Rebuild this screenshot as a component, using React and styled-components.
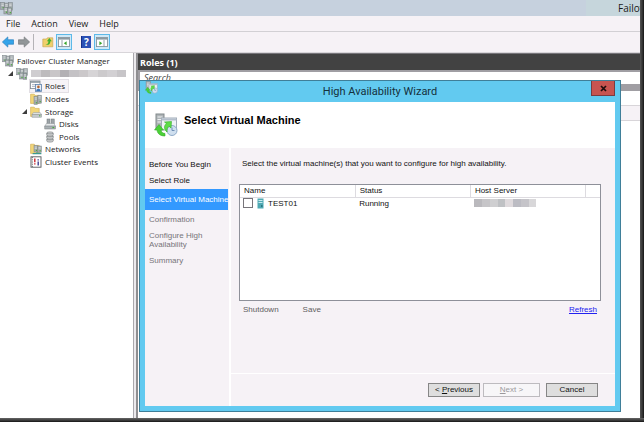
import React from "react";
import styled, { createGlobalStyle, css } from "styled-components";

const GlobalStyle = createGlobalStyle`
  * {
    box-sizing: border-box;
  }

  body {
    margin: 0;
    background: #fff;
    color: #1a1a1a;
    font-family: "Open Sans", "Noto Sans", sans-serif;
    font-size: 8px;
    line-height: 12px;
  }

  button,
  input {
    font-family: inherit;
    font-size: inherit;
    line-height: inherit;
  }
`;

/* ---------- main window ---------- */

const Desktop = styled.div`
  position: relative;
  display: grid;
  min-height: 100vh;
  padding: 0 4px 4px 0;
  background: linear-gradient(to bottom, #666 0, #2e2e2e 3px, #111 4px) bottom / 100% 4px no-repeat,
    linear-gradient(to right, #555, #2b2b2b 3px, #111) right / 4px 100% no-repeat, #222;
`;

const Window = styled.div`
  display: flex;
  flex-direction: column;
  min-width: 0;
  background: #fff;
`;

const TitleBar = styled.header`
  display: flex;
  justify-content: space-between;
  align-items: center;
  height: 16px;
  background: linear-gradient(to right, #c6d1de 0, #c6d1de calc(100% - 54px), #c6d6dc calc(100% - 54px));
`;

const WindowTitle = styled.span`
  width: 22px;
  overflow: hidden;
  white-space: nowrap;
  font-size: 10px;
`;

const MenuBar = styled.nav`
  display: flex;
  align-items: center;
  gap: 11px;
  height: 16px;
  padding-left: 6px;
  background: #f6f2f6;
  border-bottom: 1px solid #d2d0d4;
  font-size: 9px;
`;

const MenuItem = styled.button`
  padding: 0;
  border: 0;
  background: none;
  color: inherit;
`;

const ToolBar = styled.div`
  display: flex;
  align-items: center;
  gap: 6px;
  height: 21px;
  background: #f6f2f6;
  border-bottom: 1px solid #d8d5d9;
`;

const ToolGroup = styled.div`
  display: flex;
  align-items: center;
  padding-right: ${(p) => (p.$divided ? 1 : 0)}px;
  border-right: ${(p) => (p.$divided ? "1px solid #b5b3b7" : "0")};
`;

const ToolButton = styled.button`
  display: flex;
  align-items: center;
  justify-content: center;
  width: 16px;
  height: 16px;
  padding: 0;
  border: 1px solid ${(p) => (p.$active ? "#5db9e8" : "transparent")};
  background: ${(p) => (p.$active ? "#cfe9f7" : "none")};
`;

const Workspace = styled.div`
  display: grid;
  grid-template-columns: 138px 1fr;
  flex: 1;
`;

/* ---------- tree ---------- */

const TreePane = styled.aside`
  padding-top: 2px;
  background: #fff;
  border-right: 2px solid #8f8e91;
  box-shadow: inset -2px 0 #eceaed, inset -3px 0 #a9a7ac;
`;

const Tree = styled.div`
  display: flex;
  flex-direction: column;
  justify-content: space-between;
  height: 113px;
`;

const TreeRow = styled.div`
  display: flex;
  align-items: center;
  height: 12px;
  padding-left: ${(p) => 2 + p.$level * 14}px;
`;

const Twisty = styled.span`
  width: 8px;
  height: 12px;
  margin-left: -8px;
  display: flex;
  align-items: center;
`;

const TreeLabel = styled.span`
  display: flex;
  align-items: center;
  gap: 3px;
  height: 12px;
  padding-right: 3px;
  white-space: nowrap;
  ${(p) =>
    p.$selected &&
    css`
      background: #f6f3f7;
      box-shadow: 0 0 0 1px #e2dfe4;
    `}
`;

const Mosaic = styled.span`
  display: flex;
  width: ${(p) => p.$width}px;
  height: ${(p) => p.$height}px;
`;

const MosaicTile = styled.span`
  flex: 1;
  background: ${(p) => p.$tone};
`;

/* ---------- roles list ---------- */

const RolesPane = styled.main`
  background: #fff;
`;

const RolesHeading = styled.h1`
  height: 17px;
  margin: 0;
  padding: 2px 2px 0;
  background: #424242;
  border-top: 1px solid #77757a;
  color: #fff;
  font-size: 9px;
  line-height: 13px;
  font-weight: 700;
`;

const SearchStrip = styled.div`
  height: 21px;
  padding: 2px 0 7px 2px;
  background: #a09ea3;
`;

const SearchInput = styled.input`
  display: block;
  width: 100%;
  height: 12px;
  padding: 0 4px;
  border: 0;
  background: #fff;
  font-size: 9px;
  font-style: italic;

  &::placeholder {
    color: #444;
    opacity: 1;
  }
`;

const ColumnStrip = styled.div`
  height: 16px;
  margin-top: 14px;
  background: #f6f2f6;
  border: solid #d8d5d9;
  border-width: 1px 0;
`;

/* ---------- wizard ---------- */

const Dialog = styled.section`
  position: absolute;
  top: 80px;
  right: 23px;
  bottom: 10px;
  left: 139px;
  display: flex;
  flex-direction: column;
  padding: 0 5px 5px;
  background: #62caf0;
  border: 1px solid #3f7f99;
  color: #111;
  font-family: "Liberation Sans", Arial, sans-serif;
  line-height: 9px;
`;

const DialogBar = styled.header`
  display: grid;
  grid-template-columns: 24px 1fr 24px;
  height: 21px;
`;

const DialogTitle = styled.h2`
  margin: 0;
  color: #15303b;
  font-family: Roboto, sans-serif;
  font-size: 11px;
  font-weight: 400;
  line-height: 21px;
  text-align: center;
`;

const CloseButton = styled.button`
  display: flex;
  align-items: center;
  justify-content: center;
  width: 24px;
  height: 15px;
  padding: 0;
  border: 1px solid #7b3b40;
  border-top: 0;
  background: #c75450;
`;

const Banner = styled.div`
  display: flex;
  align-items: center;
  gap: 6px;
  height: 46px;
  padding-left: 9px;
  background: #fff;
`;

const BannerTitle = styled.h3`
  margin: 0 0 10px;
  color: #000;
  font-size: 11px;
  line-height: 14px;
  font-weight: 700;
`;

const DialogBody = styled.div`
  display: grid;
  grid-template-columns: 84px 1fr;
  flex: 1;
  gap: 2px;
  background: #fff;
`;

const Steps = styled.ol`
  margin: 0;
  padding: 9px 0 0;
  background: #f6f2f6;
  list-style: none;
`;

const Step = styled.li`
  padding: 3px 4px 4px;
  margin-right: 1px;
  color: ${(p) => (p.$pending ? "#77757a" : "#111")};
  ${(p) =>
    p.$current &&
    css`
      margin-bottom: 2px;
      padding: 6px 4px;
      background: #3399ff;
      color: #fff;
      white-space: nowrap;
    `}
`;

const StepContent = styled.div`
  display: flex;
  flex-direction: column;
  gap: 1px;
  background: #fff;
`;

const Panel = styled.div`
  flex: 1;
  padding: 11px 14px 0 8px;
  background: #f6f2f6;
`;

const Prompt = styled.p`
  margin: 0 0 16px;
  padding-left: 3px;
  white-space: nowrap;
`;

const ListBox = styled.div`
  height: 117px;
  background: #fff;
  border: 1px solid #8e9099;
`;

const VmTable = styled.table`
  width: 100%;
  border-collapse: collapse;
  table-layout: fixed;

  th,
  td {
    height: 12px;
    padding: 0 4px;
    font-weight: 400;
    text-align: left;
    white-space: nowrap;
  }

  th {
    border-right: 1px solid #dddbe0;
    border-bottom: 1px solid #dddbe0;
  }

  th:last-child {
    border-right: 0;
  }
`;

const Column = styled.col`
  width: ${(p) => p.$width};
`;

const VmLabel = styled.label`
  display: flex;
  align-items: center;
  gap: 4px;
`;

const CheckBox = styled.input`
  appearance: none;
  flex: none;
  width: 10px;
  height: 10px;
  margin: 0 0 0 -1px;
  border: 1px solid #77757a;
  background: #fff;
`;

const Actions = styled.div`
  display: flex;
  gap: 24px;
  padding: 4px 4px 0;

  a {
    margin-left: auto;
    color: #2222f0;
  }
`;

const TextButton = styled.button`
  padding: 0;
  border: 0;
  background: none;
  color: #5f5d61;
`;

const Footer = styled.footer`
  display: flex;
  justify-content: flex-end;
  gap: 3px;
  height: 32px;
  padding: 9px 17px 0 0;
  background: #f6f2f6;
`;

const PushButton = styled.button`
  width: ${(p) => (p.$wide ? 57 : 52)}px;
  height: 14px;
  padding: 0;
  border: 1px solid #868686;
  background: #dedede;
  color: #111;
  line-height: 12px;

  &:disabled {
    border-color: #bdbbbf;
    background: #f7f6f8;
    color: #9a989c;
  }

  &:last-child {
    margin-left: 3px;
  }
`;

/* ---------- icons ---------- */

const Icon = ({ size = 12, children }) => (
  <svg width={size} height={size} viewBox="0 0 12 12" aria-hidden="true">
    {children}
  </svg>
);

const Tower = ({ x, y, h = 7 }) => (
  <g>
    <rect x={x} y={y} width="3.6" height={h} fill="#a4abae" stroke="#7b8387" strokeWidth=".5" />
    <path d={`M${x + 0.7} ${y + 1.4}h2.2M${x + 0.7} ${y + 2.8}h2.2`} stroke="#eef1f2" strokeWidth=".6" />
    <rect x={x + 1.8} y={y + h - 2.2} width="1.2" height="1.2" fill="#4dac3e" />
  </g>
);

const ClusterIcon = ({ size }) => (
  <Icon size={size}>
    <Tower x={0.6} y={0.4} h={6.4} />
    <Tower x={4.2} y={1} h={6} />
    <Tower x={7.8} y={0.6} />
    <Tower x={3.6} y={5} h={6} />
    <Tower x={7.2} y={5.4} h={6} />
  </Icon>
);

const FolderBase = () => (
  <path d="M.6 1.2h3.6l1 1.2h4v8H.6z" fill="#f2d678" stroke="#cfaa4c" strokeWidth=".6" />
);

const RolesIcon = () => (
  <Icon>
    <rect x=".5" y="1" width="9.5" height="7.6" fill="#fdfdfd" stroke="#7c868e" strokeWidth=".8" />
    <path d="M.5 2h9.5" stroke="#8b989f" strokeWidth="1.6" />
    <path d="M2 4.6h3M2 6.4h3" stroke="#9aa6b2" strokeWidth=".8" />
    <rect x="5.4" y="4.4" width="6" height="7" fill="#e8eef5" stroke="#5a7fab" strokeWidth=".8" />
    <circle cx="8.4" cy="6.9" r="1.3" fill="#b5652f" />
    <path d="M6.2 11c0-3 4.4-3 4.4 0z" fill="#3b74b8" />
  </Icon>
);

const NodesIcon = () => (
  <Icon>
    <FolderBase />
    <Tower x={4} y={3.4} h={8} />
    <Tower x={7.8} y={2.2} h={8} />
  </Icon>
);

const StorageIcon = () => (
  <Icon>
    <FolderBase />
    <path d="M3.4 6.6h6.8l1.4 2H2z" fill="#e2e5e6" stroke="#8b9194" strokeWidth=".5" />
    <rect x="2" y="8.4" width="9.6" height="2.8" fill="#c5cacc" stroke="#8b9194" strokeWidth=".5" />
    <rect x="9" y="9.3" width="1.4" height="1" fill="#49ad3c" />
  </Icon>
);

const DisksIcon = () => (
  <Icon>
    <rect x="3" y="1" width="3" height="5" fill="#9da4a7" stroke="#6f7679" strokeWidth=".5" />
    <rect x="7.2" y="1" width="3" height="5" fill="#9da4a7" stroke="#6f7679" strokeWidth=".5" />
    <path d="M2.4 5.4h7.6l1.4 3H.8z" fill="#e6e9ea" stroke="#8b9194" strokeWidth=".5" />
    <rect x=".8" y="8" width="10.6" height="3" fill="#aab1b4" stroke="#72797c" strokeWidth=".5" />
    <rect x="8.4" y="9" width="1.8" height="1.1" fill="#49ad3c" />
  </Icon>
);

const PoolsIcon = () => (
  <Icon>
    {[8, 5, 2].map((y) => (
      <path
        key={y}
        d={`M2.8 ${y}v2c0 1.4 6.4 1.4 6.4 0v-2c0-1.4-6.4-1.4-6.4 0c0 1.2 6.4 1.2 6.4 0`}
        fill="#d5d7d8"
        stroke="#7b7f81"
        strokeWidth=".7"
      />
    ))}
  </Icon>
);

const NetworksIcon = () => (
  <Icon>
    <FolderBase />
    <Tower x={4} y={2.6} h={6.4} />
    <Tower x={7.8} y={3} h={6.4} />
    <path d="M2.6 10.6h8.8M7 9v1.6" stroke="#3c9a8e" strokeWidth="1.1" />
  </Icon>
);

const EventsIcon = () => (
  <Icon>
    <rect x="1" y=".8" width="10" height="10.4" fill="#fff" stroke="#55585b" strokeWidth=".9" />
    <path d="M2.4 1v10" stroke="#55585b" strokeWidth=".8" strokeDasharray="1 .8" />
    <path d="M4.8 2.6v3.6M4.8 7.2v1.2" stroke="#c9252d" strokeWidth="1.4" />
    <path d="M8.2 3.2v1.2M8.2 5.4v4" stroke="#40408c" strokeWidth="1.4" />
  </Icon>
);

const ArrowIcon = ({ back }) => (
  <Icon>
    <path
      d={back ? "M.4 6 5.8.9v2.9h5.8v4.400H5.800v2.900z" : "M11.600 6 6.200.9v2.900H.4v4.400h5.800v2.900z"}
      fill={back ? "#35a4ea" : "#929698"}
      stroke={back ? "#2a80bd" : "#74797b"}
      strokeWidth=".7"
    />
  </Icon>
);

const UpFolderIcon = () => (
  <Icon>
    <path d="M.8 3h3.6l1-1.2h5.4v9H.8z" fill="#f0cf6b" stroke="#c3a14c" strokeWidth=".6" />
    <path d="M3.4 8.6c2.4-.4 3-1.8 3-3.4H4.900L7.400 2l2.400 3.200H8.400c0 2.800-1.800 4.200-5 3.400z" fill="#43b02f" />
  </Icon>
);

const PaneIcon = ({ flip }) => (
  <Icon>
    <rect x=".5" y="1.4" width="11" height="9.2" fill="#fff" stroke="#7e8b92" strokeWidth=".8" />
    <path d="M.5 2.6h11" stroke="#8c9aa2" strokeWidth="2" />
    <path d={flip ? "M8 4v6.4" : "M4 4v6.4"} stroke="#7e8b92" strokeWidth=".8" />
    <path d={flip ? "M3.4 5.2v4l2.8-2z" : "M8.6 5.2v4l-2.8-2z"} fill="#39a52b" />
  </Icon>
);

const HelpGlyph = styled.span`
  width: 10px;
  height: 12px;
  background: #2b50b5;
  border-left: 1px solid #16308a;
  color: #fff;
  font-size: 10px;
  font-weight: 700;
  line-height: 12px;
  text-align: center;
`;

const WizardIcon = ({ size }) => (
  <svg width={size} height={size} viewBox="0 0 24 24" aria-hidden="true">
    <rect x="2" y="1" width="8" height="15" fill="#aeb4b7" stroke="#82898c" />
    <path d="M3.5 4h5M3.5 6.500h5M3.500 9h5" stroke="#eef1f2" />
    <rect x="7.500" y="5" width="15" height="12" fill="#eff2f6" stroke="#a0abb7" />
    <path d="M7.500 6.500h15" stroke="#b4bfcc" strokeWidth="2" />
    <circle cx="18" cy="17.500" r="5" fill="#cfdfef" stroke="#8fabc9" />
    <path d="M18 14.500v3h2.500" fill="none" stroke="#6f8fb5" />
    <path d="M.5 17 5 11.500 9.500 17H7c.3 2 1.500 3.200 4 3.500v2.500C6.500 23 3.500 21 3 17z" fill="#4bd038" stroke="#35ac28" strokeWidth=".6" />
    <path d="M17.500 8.500 17 15l-2-1.800c-1.500 1.300-2.300 3-2 5.800-3.200-3-3.300-6-.6-8.600L10.500 9z" fill="#5edc48" stroke="#35ac28" strokeWidth=".6" />
  </svg>
);

const ServerIcon = () => (
  <svg width="7" height="11" viewBox="0 0 7 11" aria-hidden="true">
    <rect x=".5" y=".5" width="6" height="10" fill="#4fa9b3" />
    <path d="M1.5 2.5h4M1.5 4.5h4" stroke="#c9eaee" />
    <rect x="4" y="7" width="1.5" height="2" fill="#2b7680" />
  </svg>
);

const CloseIcon = () => (
  <svg width="7" height="7" viewBox="0 0 7 7" aria-hidden="true">
    <path d="M1 1l5 5M6 1L1 6" stroke="#1d0d0d" strokeWidth="1.7" />
  </svg>
);

const TwistyIcon = () => (
  <svg width="5" height="5" viewBox="0 0 5 5" aria-hidden="true">
    <path d="M5 0v5H0z" fill="#3d3d3d" />
  </svg>
);

/* ---------- data ---------- */

const clusterTones = ["#cfcdd0", "#bdbbbd", "#c9c6c8", "#b3b1b4", "#c4c2c5", "#cbc8ca", "#d6d4d6", "#cccacc", "#d2d0d3", "#c7c5c8"];
const hostTones = ["#bab9bd", "#c6c5c8", "#cfcfd1", "#bfc1c4", "#dfdadd", "#bcbcc3", "#c5c4c9", "#d8d7d9"];

const treeItems = [
  { label: "Roles", icon: <RolesIcon />, level: 2, selected: true },
  { label: "Nodes", icon: <NodesIcon />, level: 2 },
  { label: "Storage", icon: <StorageIcon />, level: 2, open: true },
  { label: "Disks", icon: <DisksIcon />, level: 3 },
  { label: "Pools", icon: <PoolsIcon />, level: 3 },
  { label: "Networks", icon: <NetworksIcon />, level: 2 },
  { label: "Cluster Events", icon: <EventsIcon />, level: 2 },
];

const steps = [
  { label: "Before You Begin" },
  { label: "Select Role" },
  { label: "Select Virtual Machine", current: true },
  { label: "Confirmation", pending: true },
  { label: "Configure High Availability", pending: true },
  { label: "Summary", pending: true },
];

const Redacted = ({ tones, width, height }) => (
  <Mosaic $width={width} $height={height}>
    {tones.map((tone, i) => (
      <MosaicTile key={i} $tone={tone} />
    ))}
  </Mosaic>
);

const Wizard = () => (
  <Dialog role="dialog" aria-labelledby="wizard-title">
    <DialogBar>
      <WizardIcon size={13} />
      <DialogTitle id="wizard-title">High Availability Wizard</DialogTitle>
      <CloseButton aria-label="Close">
        <CloseIcon />
      </CloseButton>
    </DialogBar>
    <Banner>
      <WizardIcon size={24} />
      <BannerTitle>Select Virtual Machine</BannerTitle>
    </Banner>
    <DialogBody>
      <Steps>
        {steps.map((step) => (
          <Step key={step.label} $current={step.current} $pending={step.pending}>
            {step.label}
          </Step>
        ))}
      </Steps>
      <StepContent>
        <Panel>
          <Prompt>Select the virtual machine(s) that you want to configure for high availability.</Prompt>
          <ListBox>
            <VmTable>
              <colgroup>
                <Column $width="32%" />
                <Column $width="32%" />
                <Column $width="32%" />
                <Column $width="4%" />
              </colgroup>
              <thead>
                <tr>
                  <th>Name</th>
                  <th>Status</th>
                  <th>Host Server</th>
                  <th aria-hidden="true" />
                </tr>
              </thead>
              <tbody>
                <tr>
                  <td>
                    <VmLabel>
                      <CheckBox type="checkbox" />
                      <ServerIcon />
                      TEST01
                    </VmLabel>
                  </td>
                  <td>Running</td>
                  <td>
                    <Redacted tones={hostTones} width={62} height={8} />
                  </td>
                  <td />
                </tr>
              </tbody>
            </VmTable>
          </ListBox>
          <Actions>
            <TextButton>Shutdown</TextButton>
            <TextButton>Save</TextButton>
            <a href="#refresh">Refresh</a>
          </Actions>
        </Panel>
        <Footer>
          <PushButton>
            &lt; <u>P</u>revious
          </PushButton>
          <PushButton $wide disabled>
            <u>N</u>ext &gt;
          </PushButton>
          <PushButton>Cancel</PushButton>
        </Footer>
      </StepContent>
    </DialogBody>
  </Dialog>
);

const App = () => (
  <Desktop>
    <GlobalStyle />
    <Window>
      <TitleBar>
        <ClusterIcon size={13} />
        <WindowTitle>Failover Cluster Manager</WindowTitle>
      </TitleBar>
      <MenuBar>
        {["File", "Action", "View", "Help"].map((item) => (
          <MenuItem key={item}>{item}</MenuItem>
        ))}
      </MenuBar>
      <ToolBar>
        <ToolGroup $divided>
          <ToolButton aria-label="Back">
            <ArrowIcon back />
          </ToolButton>
          <ToolButton aria-label="Forward">
            <ArrowIcon />
          </ToolButton>
        </ToolGroup>
        <ToolGroup>
          <ToolButton aria-label="Up one level">
            <UpFolderIcon />
          </ToolButton>
          <ToolButton aria-label="Show console tree" $active>
            <PaneIcon />
          </ToolButton>
        </ToolGroup>
        <ToolGroup>
          <ToolButton aria-label="Help">
            <HelpGlyph>?</HelpGlyph>
          </ToolButton>
          <ToolButton aria-label="Show action pane" $active>
            <PaneIcon flip />
          </ToolButton>
        </ToolGroup>
      </ToolBar>
      <Workspace>
        <TreePane>
          <Tree>
            <TreeRow $level={0}>
              <TreeLabel>
                <ClusterIcon size={12} />
                Failover Cluster Manager
              </TreeLabel>
            </TreeRow>
            <TreeRow $level={1}>
              <Twisty>
                <TwistyIcon />
              </Twisty>
              <TreeLabel>
                <ClusterIcon size={12} />
                <Redacted tones={clusterTones} width={95} height={7} />
              </TreeLabel>
            </TreeRow>
            {treeItems.map((item) => (
              <TreeRow key={item.label} $level={item.level}>
                {item.open && (
                  <Twisty>
                    <TwistyIcon />
                  </Twisty>
                )}
                <TreeLabel $selected={item.selected}>
                  {item.icon}
                  {item.label}
                </TreeLabel>
              </TreeRow>
            ))}
          </Tree>
        </TreePane>
        <RolesPane>
          <RolesHeading>Roles (1)</RolesHeading>
          <SearchStrip>
            <SearchInput placeholder="Search" aria-label="Search" />
          </SearchStrip>
          <ColumnStrip />
        </RolesPane>
      </Workspace>
    </Window>
    <Wizard />
  </Desktop>
);

export default App;
